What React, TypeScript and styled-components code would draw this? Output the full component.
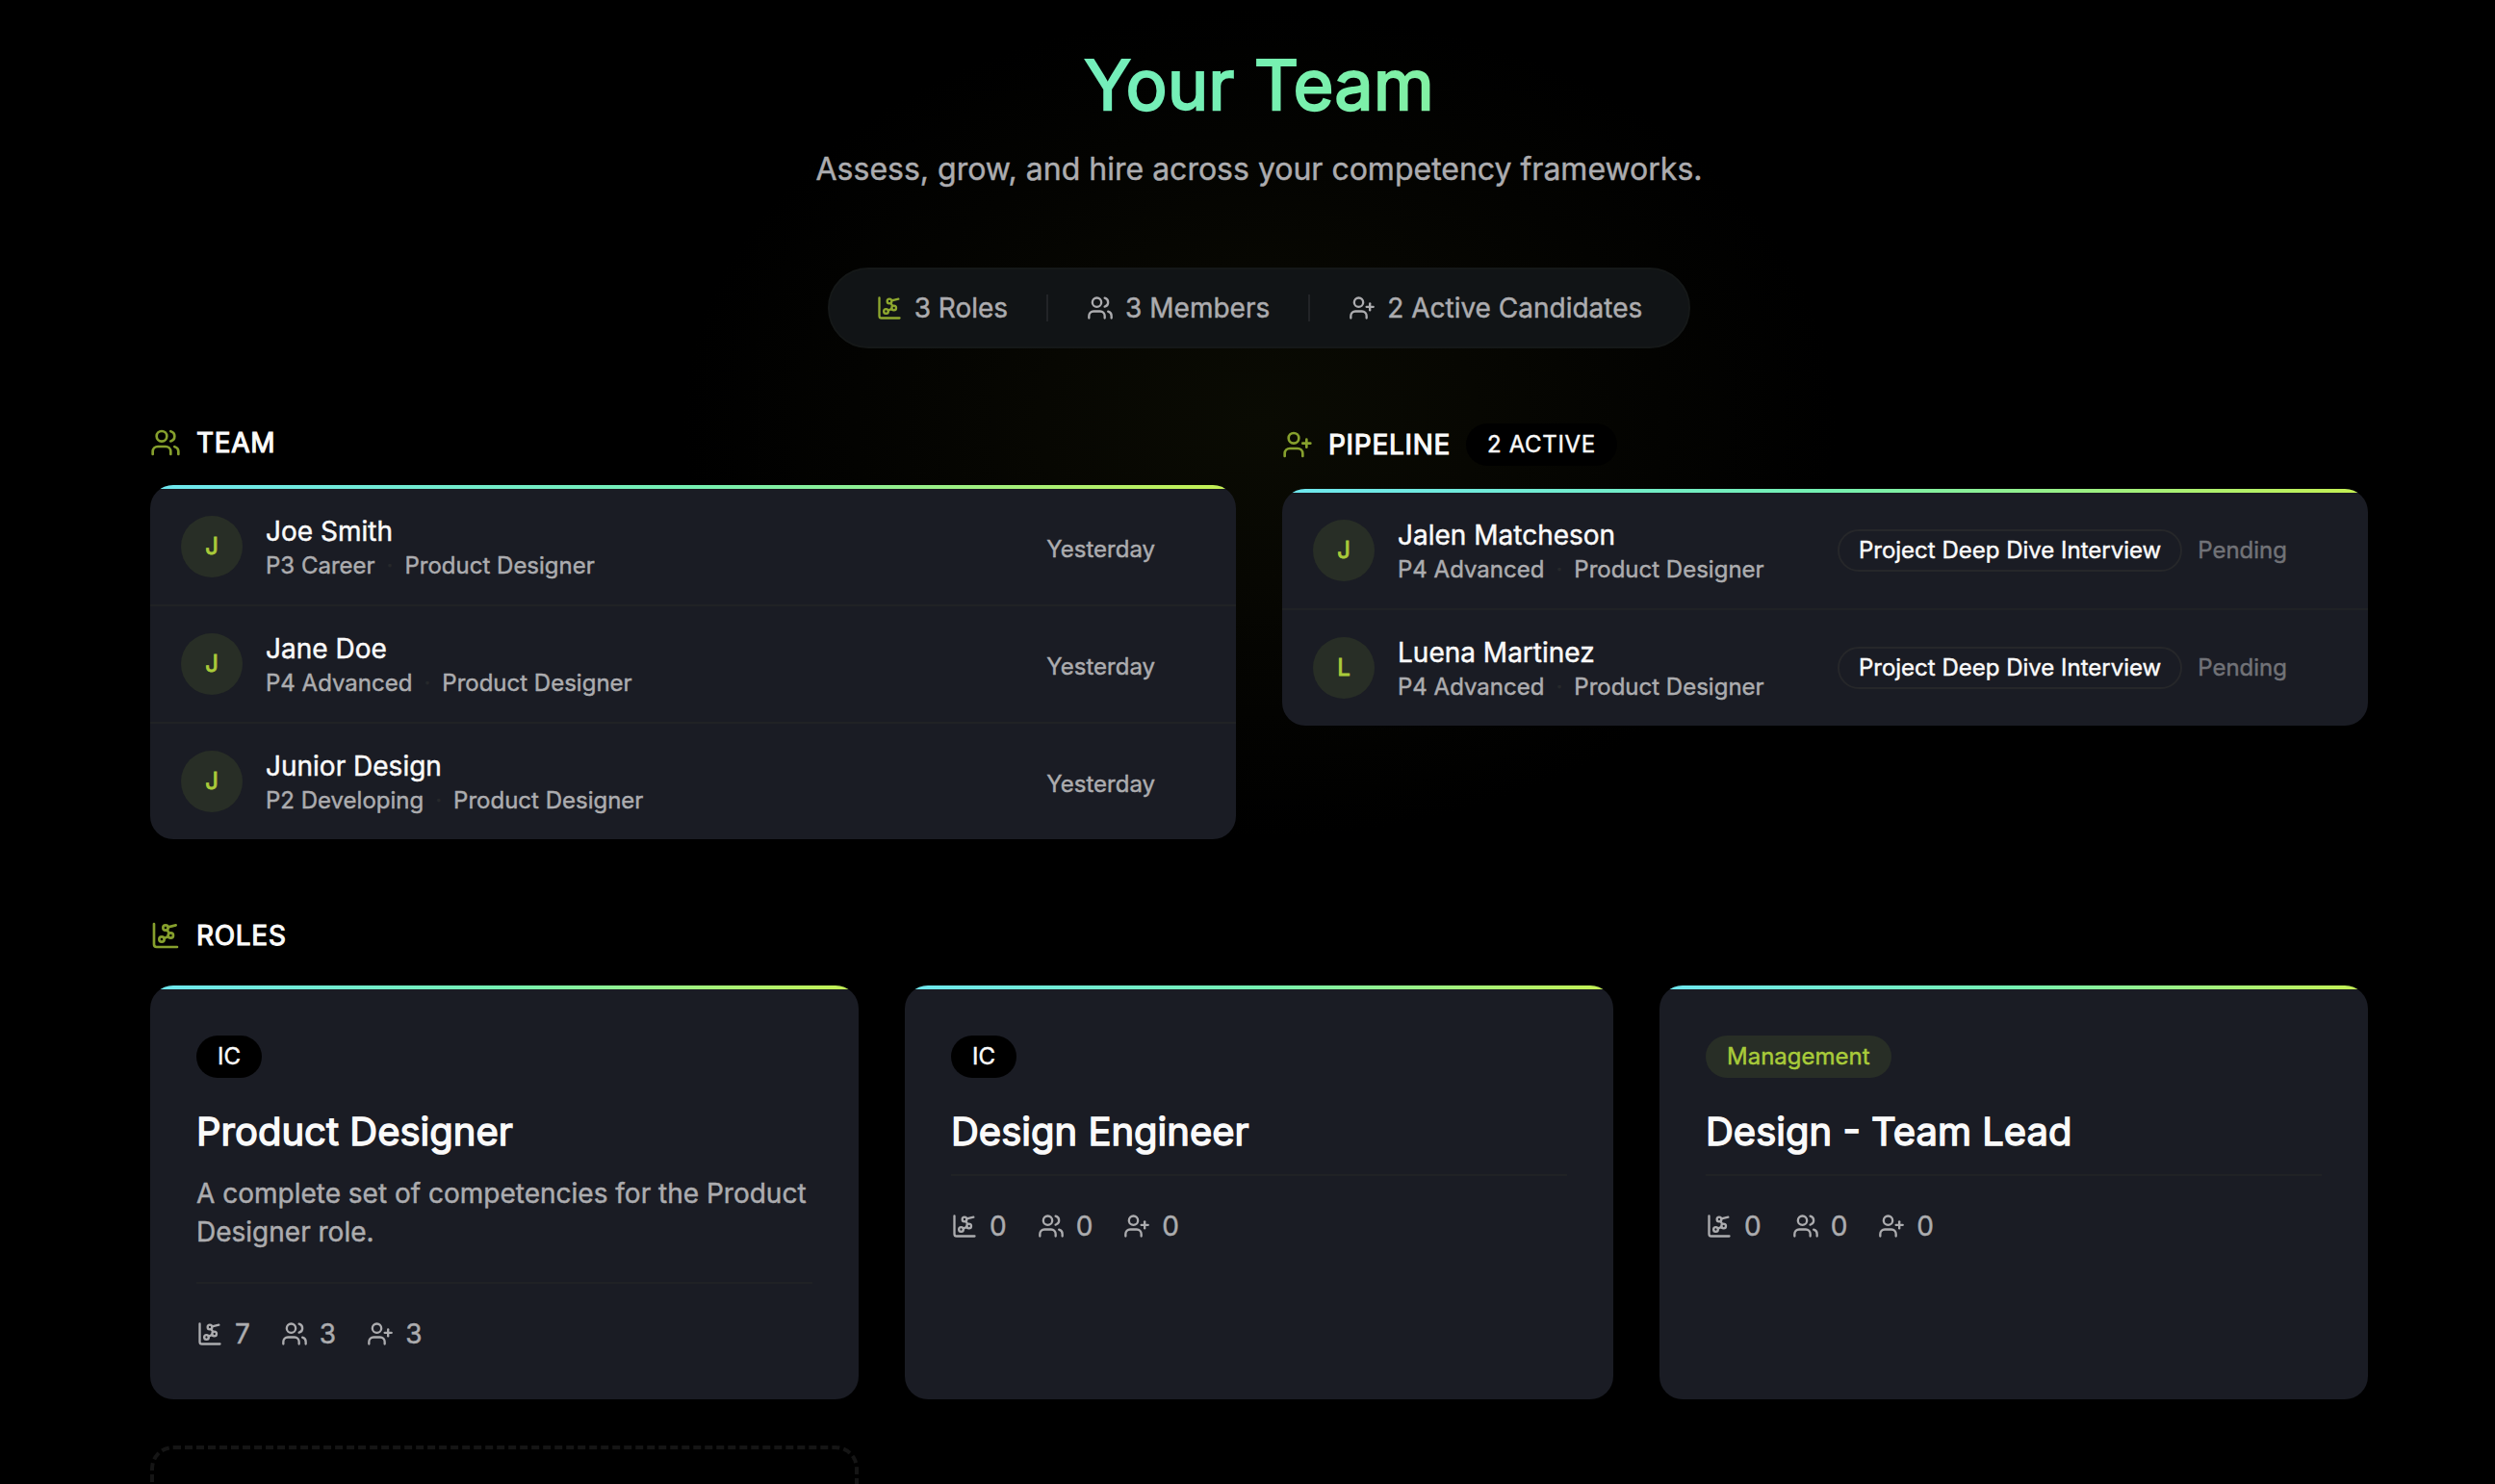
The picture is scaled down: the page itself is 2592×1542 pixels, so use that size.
import React from "react";
import styled, { createGlobalStyle } from "styled-components";
import { ChartNetwork, UserPlus, Users } from "lucide-react";

const GlobalStyle = createGlobalStyle`
  * { box-sizing: border-box; margin: 0; }
  html, body { background: #000; }
  body {
    font-family: Inter, "Liberation Sans", sans-serif;
    color: #fafafa;
    -webkit-text-stroke: 0.45px currentColor;
  }
`;

const lime = "#a9cb3a";
const muted = "#acacaf";

const Page = styled.main`
  height: 1542px;
  overflow: hidden;
  padding: 28px 132px 0 156px;
  background: radial-gradient(ellipse 600px 430px at 1308px 440px, #0a0b03 0%, #070702 38%, #030301 70%, #000 100%), #000;
`;

const Hero = styled.header`
  display: flex;
  flex-direction: column;
  align-items: center;
`;

const Title = styled.h1`
  font-size: 72px;
  font-weight: 400;
  line-height: 120px;
  width: 100%;
  text-align: center;
  letter-spacing: 0;
  color: transparent;
  -webkit-text-stroke: 2.25px transparent;
  background: linear-gradient(90deg, #6ee7f0 0%, #75f0b2 50%, #c6f052 100%);
  background-clip: text;
  -webkit-background-clip: text;
`;

const Subtitle = styled.p`
  margin-top: 4px;
  font-size: 32px;
  line-height: 48px;
  color: ${muted};
`;

const Stats = styled.div`
  display: flex;
  align-items: center;
  gap: 40px;
  height: 84px;
  margin-top: 78px;
  padding: 0 48px;
  border: 2px solid #151818;
  border-radius: 42px;
  background: #111416;
`;

const Stat = styled.div<{ $accent?: boolean }>`
  display: flex;
  align-items: center;
  gap: 12px;
  font-size: 28px;
  line-height: 40px;
  color: ${muted};
  svg { color: ${(p) => (p.$accent ? "#8ea82f" : muted)}; }
`;

const Separator = styled.span`
  width: 2px;
  height: 28px;
  background: #222427;
`;

const Columns = styled.div`
  display: grid;
  grid-template-columns: 1fr 1fr;
  gap: 48px;
  align-items: start;
  margin-top: 78px;
`;

const SectionHead = styled.div<{ $gap?: number }>`
  display: flex;
  align-items: center;
  gap: 16px;
  min-height: 40px;
  margin-bottom: ${(p) => p.$gap ?? 24}px;
  svg { color: #86a02d; }
`;

const SectionTitle = styled.h2`
  font-size: 28px;
  font-weight: 400;
  line-height: 40px;
  letter-spacing: 0.025em;
  -webkit-text-stroke: 1.1px currentColor;
`;

const Badge = styled.span<{ $tone?: "solid" | "outline" | "lime"; $tracking?: string }>`
  display: inline-flex;
  align-items: center;
  height: 44px;
  padding: 0 20px 2px;
  border: 2px solid ${(p) => (p.$tone === "outline" ? "#26272a" : "transparent")};
  border-radius: 22px;
  font-size: 24px;
  letter-spacing: ${(p) => p.$tracking ?? "0"};
  white-space: nowrap;
  color: ${(p) => (p.$tone === "lime" ? lime : "#fafafa")};
  background: ${(p) => (p.$tone === "outline" ? "transparent" : p.$tone === "lime" ? "#282e26" : "#000")};
`;

const Card = styled.section`
  overflow: hidden;
  border-radius: 24px;
  background: #1a1c24;
`;

const AccentBar = styled.div`
  height: 4px;
  background: linear-gradient(90deg, #6ee7f0 0%, #75f0b2 50%, #c6f052 100%);
`;

const Row = styled.div`
  display: flex;
  align-items: center;
  gap: 24px;
  height: 122px;
  padding: 0 84px 0 32px;
  border-bottom: 2px solid #202225;
  &:last-child { height: 120px; border-bottom: 0; }
`;

const Avatar = styled.div`
  display: grid;
  place-items: center;
  width: 64px;
  height: 64px;
  border-radius: 50%;
  padding-bottom: 1px;
  background: #282e26;
  color: ${lime};
  font-size: 24px;
  -webkit-text-stroke: 0.9px currentColor;
`;

const Person = styled.div`
  flex: 1;
  padding-top: 4px;
`;

const Name = styled.div`
  font-size: 28px;
  line-height: 36px;
`;

const Meta = styled.div`
  display: flex;
  gap: 12px;
  font-size: 24px;
  line-height: 36px;
  color: ${muted};
`;

const Dot = styled.span`
  color: #26282b;
`;

const When = styled.span`
  padding-top: 5px;
  font-size: 24px;
  line-height: 32px;
  color: ${muted};
`;

const Stage = styled.div`
  display: flex;
  align-items: center;
  gap: 16px;
`;

const Pending = styled.span`
  padding-bottom: 2px;
  font-size: 24px;
  color: #717277;
`;

const Roles = styled.section`
  margin-top: 80px;
`;

const RoleGrid = styled.div`
  display: grid;
  grid-template-columns: repeat(3, 1fr);
  gap: 48px;
`;

const RoleBody = styled.div`
  padding: 48px;
`;

const RoleName = styled.h3`
  margin: 24px 0 12px;
  font-size: 40px;
  font-weight: 400;
  line-height: 64px;
  -webkit-text-stroke: 1.4px currentColor;
`;

const Description = styled.p`
  margin-bottom: 32px;
  font-size: 28px;
  line-height: 40px;
  color: ${muted};
`;

const Counts = styled.div`
  display: flex;
  gap: 32px;
  padding-top: 32px;
  border-top: 2px solid #202225;
`;

const AddRole = styled.div`
  height: 300px;
  border: 4px dashed #151515;
  border-radius: 24px;
`;

type Member = { name: string; level: string; role: string };

const team: Member[] = [
  { name: "Joe Smith", level: "P3 Career", role: "Product Designer" },
  { name: "Jane Doe", level: "P4 Advanced", role: "Product Designer" },
  { name: "Junior Design", level: "P2 Developing", role: "Product Designer" },
];

const pipeline: Member[] = [
  { name: "Jalen Matcheson", level: "P4 Advanced", role: "Product Designer" },
  { name: "Luena Martinez", level: "P4 Advanced", role: "Product Designer" },
];

const roles = [
  { kind: "IC", name: "Product Designer", text: "A complete set of competencies for the Product Designer role.", counts: [7, 3, 3] },
  { kind: "IC", name: "Design Engineer", counts: [0, 0, 0] },
  { kind: "Management", name: "Design - Team Lead", counts: [0, 0, 0] },
];

const small = { size: 28, strokeWidth: 2 };
const large = { size: 32, strokeWidth: 2 };
const countIcons = [ChartNetwork, Users, UserPlus];

function PersonRow({ person, children }: { person: Member; children: React.ReactNode }) {
  return (
    <Row>
      <Avatar>{person.name[0]}</Avatar>
      <Person>
        <Name>{person.name}</Name>
        <Meta>
          <span>{person.level}</span>
          <Dot>·</Dot>
          <span>{person.role}</span>
        </Meta>
      </Person>
      {children}
    </Row>
  );
}

export default function App() {
  return (
    <>
      <GlobalStyle />
      <Page>
        <Hero>
          <Title>Your Team</Title>
          <Subtitle>Assess, grow, and hire across your competency frameworks.</Subtitle>
          <Stats>
            <Stat $accent><ChartNetwork {...small} />3 Roles</Stat>
            <Separator />
            <Stat><Users {...small} />3 Members</Stat>
            <Separator />
            <Stat><UserPlus {...small} />2 Active Candidates</Stat>
          </Stats>
        </Hero>
        <Columns>
          <div>
            <SectionHead><Users {...large} /><SectionTitle>TEAM</SectionTitle></SectionHead>
            <Card>
              <AccentBar />
              {team.map((p) => (
                <PersonRow key={p.name} person={p}><When>Yesterday</When></PersonRow>
              ))}
            </Card>
          </div>
          <div>
            <SectionHead>
              <UserPlus {...large} />
              <SectionTitle>PIPELINE</SectionTitle>
              <Badge $tone="solid" $tracking="0.027em">2 ACTIVE</Badge>
            </SectionHead>
            <Card>
              <AccentBar />
              {pipeline.map((p) => (
                <PersonRow key={p.name} person={p}>
                  <Stage>
                    <Badge $tone="outline">Project Deep Dive Interview</Badge>
                    <Pending>Pending</Pending>
                  </Stage>
                </PersonRow>
              ))}
            </Card>
          </div>
        </Columns>
        <Roles>
          <SectionHead $gap={32}><ChartNetwork {...large} /><SectionTitle>ROLES</SectionTitle></SectionHead>
          <RoleGrid>
            {roles.map((r) => (
              <Card key={r.name}>
                <AccentBar />
                <RoleBody>
                  <Badge $tone={r.kind === "IC" ? "solid" : "lime"}>{r.kind}</Badge>
                  <RoleName>{r.name}</RoleName>
                  {r.text && <Description>{r.text}</Description>}
                  <Counts>
                    {r.counts.map((n, i) => {
                      const Icon = countIcons[i];
                      return <Stat key={i}><Icon {...small} />{n}</Stat>;
                    })}
                  </Counts>
                </RoleBody>
              </Card>
            ))}
            <AddRole />
          </RoleGrid>
        </Roles>
      </Page>
    </>
  );
}
